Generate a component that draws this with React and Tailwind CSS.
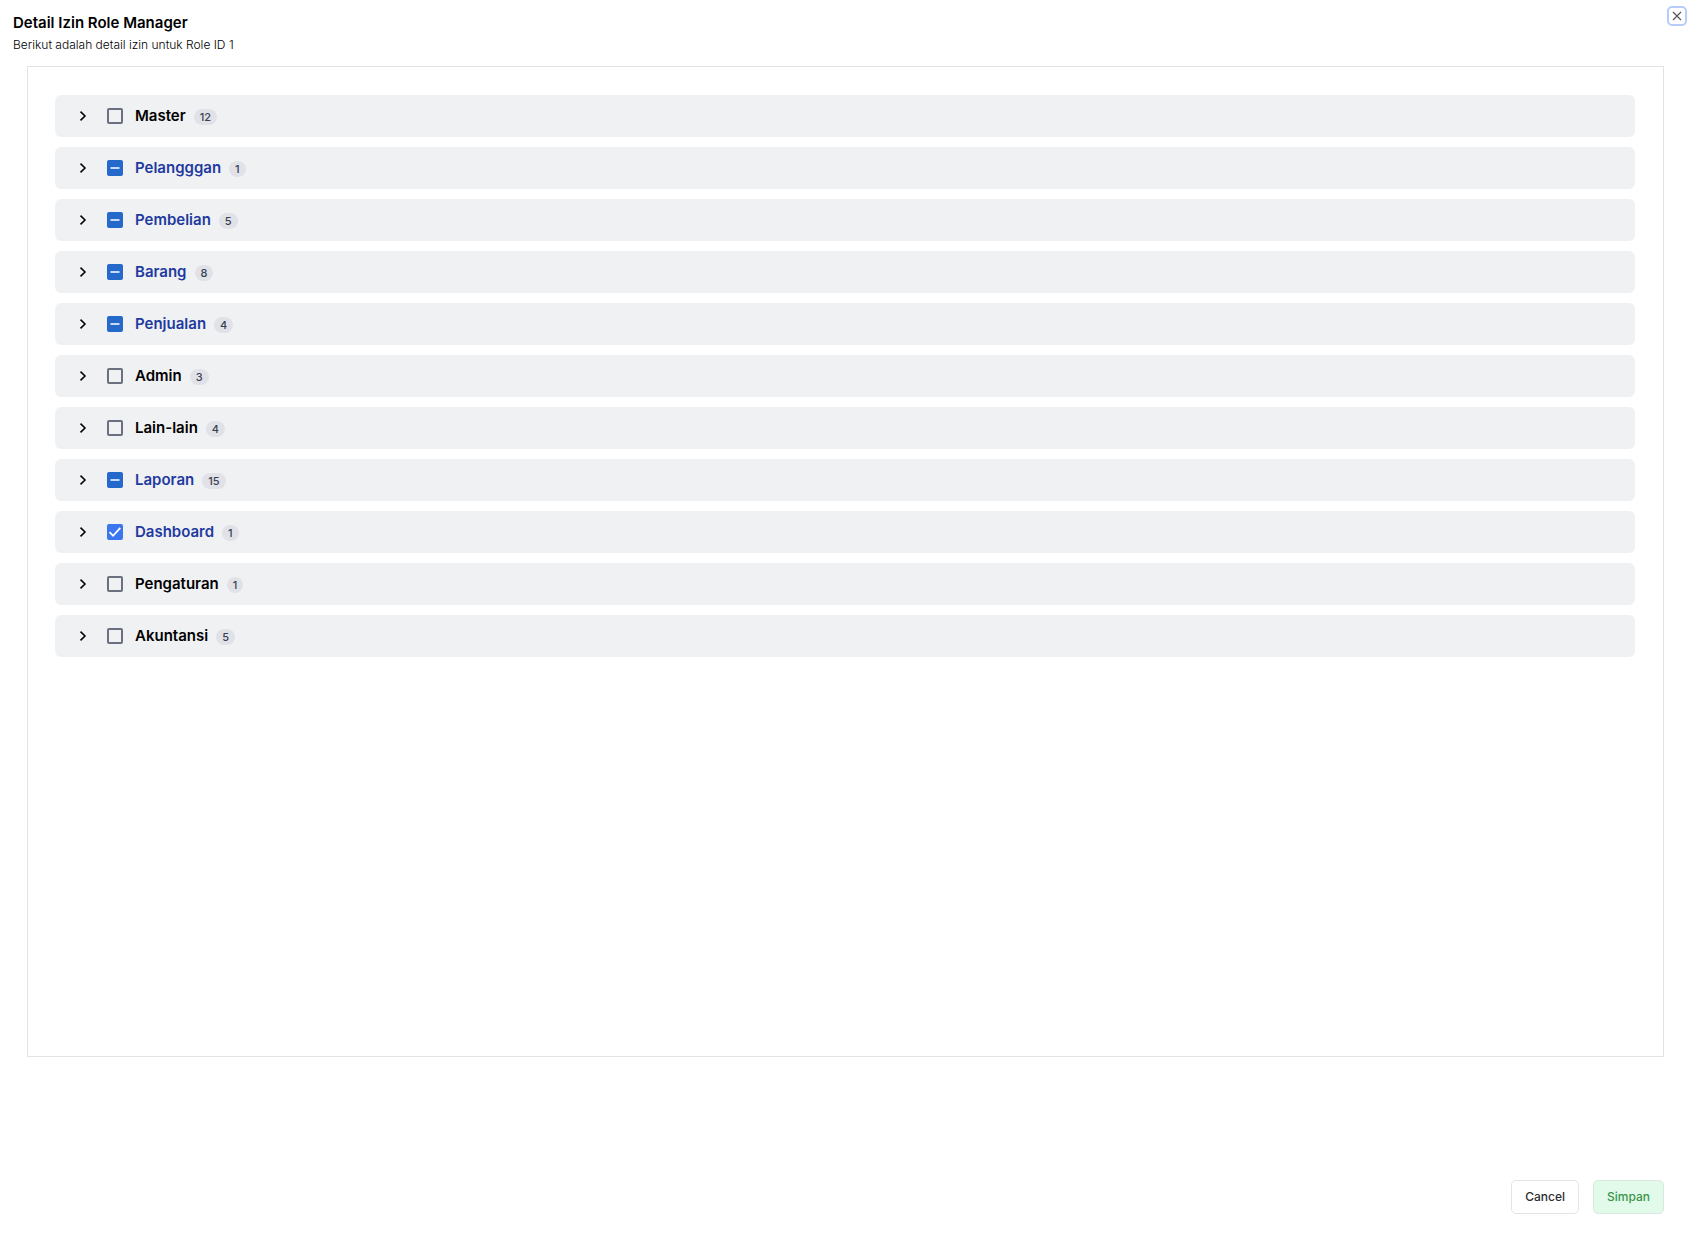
import React, { useEffect, useRef, useState } from "react";

const initialGroups = [
  { name: "Master", count: 12, state: "none" },
  { name: "Pelangggan", count: 1, state: "some" },
  { name: "Pembelian", count: 5, state: "some" },
  { name: "Barang", count: 8, state: "some" },
  { name: "Penjualan", count: 4, state: "some" },
  { name: "Admin", count: 3, state: "none" },
  { name: "Lain-lain", count: 4, state: "none" },
  { name: "Laporan", count: 15, state: "some" },
  { name: "Dashboard", count: 1, state: "all" },
  { name: "Pengaturan", count: 1, state: "none" },
  { name: "Akuntansi", count: 5, state: "none" },
];

const boxStyles = {
  none: "border-2 border-[#6b7080] bg-transparent",
  some: "bg-[#256acb]",
  all: "bg-[#3b76f0]",
};

function GroupCheckbox({ id, state, onChange }) {
  const ref = useRef(null);
  useEffect(() => {
    ref.current.indeterminate = state === "some";
  }, [state]);
  return (
    <span className="relative block size-4 shrink-0">
      <input
        ref={ref}
        id={id}
        type="checkbox"
        checked={state === "all"}
        onChange={onChange}
        className={`block size-4 appearance-none rounded-xs ${boxStyles[state]}`}
      />
      {state !== "none" && (
        <svg
          viewBox="0 0 16 16"
          className="pointer-events-none absolute inset-0 size-4 text-white"
          fill="none"
          stroke="currentColor"
          aria-hidden="true"
        >
          {state === "some" ? (
            <path d="M3.5 8h9" strokeWidth="1.5" />
          ) : (
            <path d="M2.5 8.2l3.6 3.6 7.2-8" strokeWidth="1.8" />
          )}
        </svg>
      )}
    </span>
  );
}

function GroupRow({ group, onToggle }) {
  const id = `group-${group.name}`;
  return (
    <li className="flex h-[42px] items-center rounded-md bg-[#f0f1f3] pl-5">
      <button type="button" aria-label={`Buka ${group.name}`} className="flex size-4 items-center justify-center">
        <svg viewBox="0 0 16 16" className="size-4 text-black" fill="none" stroke="currentColor" strokeWidth="1.5" aria-hidden="true">
          <path d="M5.5 3.6L10 8l-4.5 4.4" />
        </svg>
      </button>
      <div className="ml-4 flex items-center">
        <GroupCheckbox id={id} state={group.state} onChange={onToggle} />
        <label
          htmlFor={id}
          className={`ml-3 text-[15px] leading-6 font-semibold ${group.state === "none" ? "text-black" : "text-[#1e3a9f]"}`}
        >
          {group.name}
        </label>
        <span className="mt-0.5 ml-2 flex h-4 items-center rounded-full bg-[#e1e2e8] px-1.5 text-[11px] font-medium text-[#374151]">
          {group.count}
        </span>
      </div>
    </li>
  );
}

export default function App() {
  const [groups, setGroups] = useState(initialGroups);
  const toggle = (name) =>
    setGroups((list) =>
      list.map((g) => (g.name === name ? { ...g, state: g.state === "all" ? "none" : "all" } : g))
    );

  return (
    <div
      role="dialog"
      aria-labelledby="dialog-title"
      className="flex min-h-screen flex-col bg-white pb-[22px] font-[Inter,sans-serif] text-black"
    >
      <header className="flex items-start justify-between pt-1.5 pr-[5px] pl-[13px]">
        <div className="pt-[7px]">
          <h1 id="dialog-title" className="text-[15px] leading-5 font-semibold">
            Detail Izin Role Manager
          </h1>
          <p className="mt-0.5 text-xs leading-5 font-light">Berikut adalah detail izin untuk Role ID 1</p>
        </div>
        <button
          type="button"
          aria-label="Tutup"
          className="flex size-5 items-center justify-center rounded-[5px] border-2 border-[#b6ccfb] text-[#555]"
        >
          <svg viewBox="0 0 16 16" className="size-4 shrink-0" fill="none" stroke="currentColor" strokeWidth="1.2" aria-hidden="true">
            <path d="M4 4l8 8M12 4l-8 8" />
          </svg>
        </button>
      </header>

      <main className="mt-[11px] mr-7 ml-[27px] flex-1 border border-[#e2e3e7] p-7 pl-[27px]">
        <ul className="flex flex-col gap-2.5">
          {groups.map((group) => (
            <GroupRow key={group.name} group={group} onToggle={() => toggle(group.name)} />
          ))}
        </ul>
      </main>

      <footer className="mt-[123px] mr-7 flex justify-end gap-3.5">
        <button type="button" className="h-[34px] rounded-[5px] border border-[#e3e4e8] bg-white px-[13px] text-xs font-medium text-[#2c2c30]">
          Cancel
        </button>
        <button type="button" className="h-[34px] rounded-[5px] border border-[#d9e8e0] bg-[#e1faea] px-[13px] text-xs font-medium text-[#3a954a]">
          Simpan
        </button>
      </footer>
    </div>
  );
}
